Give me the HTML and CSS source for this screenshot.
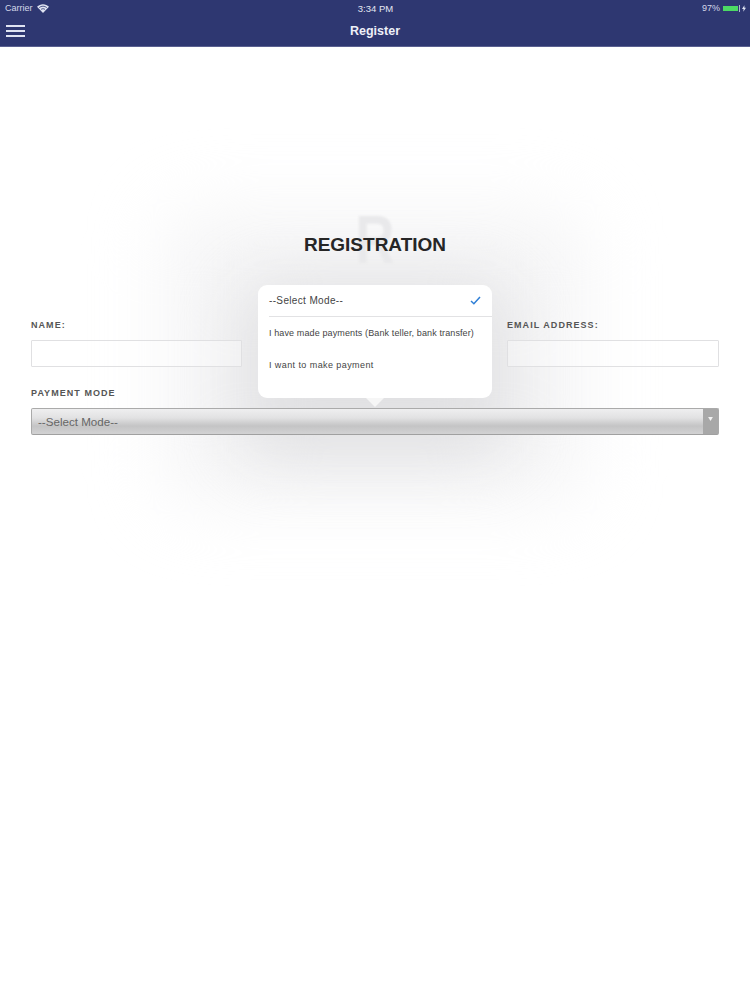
FILE: index.html
```html
<!DOCTYPE html>
<html lang="en">
<head>
<meta charset="utf-8">
<title>Register</title>
<link rel="stylesheet" href="styles.css">
</head>
<body>
<header class="topbar">
  <div class="status">
    <div class="status-left"><span>Carrier</span>
      <svg class="wifi" viewBox="0 0 12 9" width="12" height="9"><path d="M6 9 L0 2.8 C3.4 -.6 8.6 -.6 12 2.8 Z" fill="#dfe3f2"/><path d="M2.2 3.6 C4.4 1.7 7.6 1.7 9.8 3.6 M4 5.4 C5.2 4.5 6.8 4.5 8 5.4" stroke="#2e3771" stroke-width=".8" fill="none"/></svg>
    </div>
    <div class="status-time">3:34 PM</div>
    <div class="status-right"><span>97%</span>
      <span class="battery"><span class="battery-fill"></span></span>
      <svg viewBox="0 0 5 8" width="4" height="7"><path d="M3 0 L0 4.6 H2 L1.6 8 L5 3.2 H3 Z" fill="#dfe3f2"/></svg>
    </div>
  </div>
  <nav class="nav">
    <div class="burger"><i></i><i></i><i></i></div>
    <div class="nav-title">Register</div>
  </nav>
</header>
<main class="page">
  <div class="glow glow-outer"></div>
  <div class="glow glow-inner"></div>
  <div class="watermark">R</div>
  <h1 class="title">REGISTRATION</h1>
  <div class="fields">
    <div class="field"><label class="label">NAME:</label><div class="input"></div></div>
    <div class="field"></div>
    <div class="field"><label class="label">EMAIL ADDRESS:</label><div class="input"></div></div>
  </div>
  <div class="mode">
    <label class="label">PAYMENT MODE</label>
    <div class="select"><span class="select-text">--Select Mode--</span><span class="select-btn"><svg viewBox="0 0 6 5" width="5" height="4"><path d="M0 0 H6 L3 5 Z" fill="#f2f2f2"/></svg></span></div>
  </div>
  <div class="popover">
    <div class="option first"><span>--Select Mode--</span>
      <svg viewBox="0 0 12 10" width="11" height="9"><path d="M1 5.6 L4.2 8.6 L11 1" fill="none" stroke="#2f7fd6" stroke-width="1.7"/></svg>
    </div>
    <div class="option">I have made payments (Bank teller, bank transfer)</div>
    <div class="option short">I want to make payment</div>
    <span class="arrow"></span>
  </div>
</main>
</body>
</html>
```
FILE: styles.css
```css
* { box-sizing: border-box; }
html, body { margin: 0; height: 100%; overflow: hidden; }
body { background: #fff; font-family: "Liberation Sans", Arial, sans-serif; color: #222; }
.topbar { height: 47px; background: #2e3771; color: #fff; border-bottom: 1px solid #5a6090; }
.status { height: 15px; padding: 1px 4px 0 5px; display: grid; grid-template-columns: 1fr auto 1fr; align-items: center; font-size: 9px; color: #d5d9ea; }
.status-left { display: flex; align-items: center; gap: 4px; }
.status-time { font-size: 9.5px; color: #e4e6f2; }
.status-right { display: flex; align-items: center; justify-content: flex-end; gap: 2px; }
.battery { width: 18px; height: 7px; padding: 1px; border-right: 1px solid #aeb4d0; display: flex; }
.battery-fill { flex: 1; background: #4cd964; }
.nav { height: 31px; position: relative; display: flex; align-items: center; justify-content: center; }
.burger { position: absolute; left: 6px; top: 10px; width: 19px; display: flex; flex-direction: column; gap: 3px; }
.burger i { display: block; height: 2px; background: #dfe3f2; }
.nav-title { font-size: 12.5px; font-weight: bold; color: #eef0f8; }
.page { position: relative; height: 953px; padding: 186px 31px 0; overflow: hidden; }
.glow { position: absolute; border-radius: 40px; }
.glow-outer { left: 165px; top: 165px; width: 420px; height: 290px; background: #f5f5f6; filter: blur(35px); }
.glow-inner { left: 240px; top: 235px; width: 270px; height: 175px; background: #e1e1e3; filter: blur(30px); }
.watermark { position: absolute; left: 346px; top: 158px; width: 58px; text-align: center; font-size: 68px; font-weight: bold; color: #e9e9eb; line-height: 1; transform: scaleX(.8); filter: blur(1px); }
.title { position: relative; margin: 0; text-align: center; font-size: 19px; line-height: 24px; color: #262626; font-weight: bold; }
.fields { position: relative; margin-top: 62px; display: grid; grid-template-columns: 211px 211px 212px; column-gap: 27px; }
.label { display: block; font-size: 9px; line-height: 12px; font-weight: bold; letter-spacing: 1.05px; color: #555; }
.input { margin-top: 9px; height: 27px; border: 1px solid #e0e0e2; border-radius: 1px; background: rgba(255,255,255,.35); }
.mode { position: relative; margin-top: 20px; }
.select { margin-top: 9px; height: 27px; display: flex; justify-content: space-between; border: 1px solid #aaa; border-bottom-color: #a0a0a0; border-radius: 2px; background: linear-gradient(#efeff0 0%, #e2e2e3 35%, #c4c4c5 68%, #d2d2d3 100%); }
.select-text { padding-left: 6px; font-size: 11.6px; line-height: 26px; color: #666; }
.select-btn { width: 15px; display: flex; justify-content: center; padding-top: 8px; background: #a8a8a8; }
.popover { position: absolute; left: 258px; top: 238px; width: 234px; height: 113px; padding-left: 11px; background: #fff; border-radius: 9px; }
.option { height: 32px; display: flex; align-items: center; font-size: 9px; letter-spacing: .12px; color: #444; }
.option.first { height: 32px; justify-content: space-between; padding-right: 11px; font-size: 10px; letter-spacing: .35px; border-bottom: 1px solid #e2e2e4; }
.option.short { letter-spacing: .42px; }
.arrow { position: absolute; left: 108px; top: 113px; width: 0; height: 0; border-left: 9px solid transparent; border-right: 9px solid transparent; border-top: 9px solid #f6f6f6; }
```
